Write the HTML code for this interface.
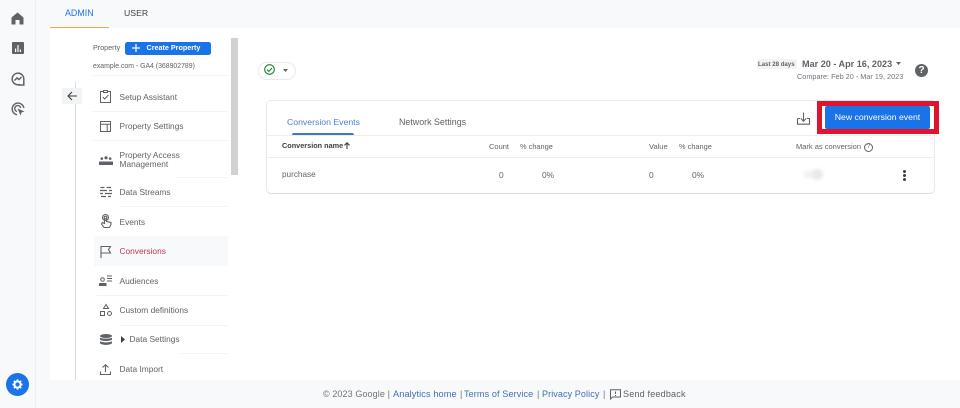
<!DOCTYPE html>
<html><head><meta charset="utf-8"><style>
html,body{margin:0;padding:0}
body{width:960px;height:408px;overflow:hidden;position:relative;background:#fff;font-family:"Liberation Sans",sans-serif;color:#5f6368;filter:blur(.3px)}
.a{position:absolute;white-space:nowrap}
.t{position:absolute;white-space:nowrap;font-size:8.350px;line-height:10px;color:#5f6368}
.h{position:absolute;height:1px;background:#f1f3f4}
svg{position:absolute;overflow:visible}
</style></head><body>
<div class="a" style="left:0;top:0;width:960px;height:28px;background:#f8f9fa"></div>
<div class="a" style="left:0;top:0;width:50px;height:408px;background:#f8f9fa"></div>
<div class="a" style="left:0;top:380px;width:960px;height:28px;background:#f8f9fa"></div>
<div class="a" style="left:0;top:0;width:35px;height:408px;background:#f8f9fa;border-right:1px solid #eceef0"></div>

<svg style="left:11px;top:12px" width="13" height="13" viewBox="0 0 13 13"><path d="M6.500 .5L12.500 5.500V12.500H8.500V8H4.500V12.500H.5V5.500Z" fill="#5f6368"/></svg>
<svg style="left:12px;top:42px" width="12" height="12" viewBox="0 0 12 12"><rect width="12" height="12" rx="1" fill="#5f6368"/><path d="M3 6.500h1.200V10H3zM5.400 3h1.200v7H5.400zM7.800 7.500H9V10H7.800z" fill="#fff"/></svg>
<svg style="left:11px;top:72px" width="14" height="14" viewBox="0 0 14 14" fill="none" stroke="#5f6368" stroke-width="1.500"><path d="M9 12.400A5.800 5.800 0 1 1 12.800 7V13H7"/><path d="M3.500 8.500L6 6l2 1.500 2.500-2.500"/></svg>
<svg style="left:11px;top:102px" width="14" height="14" viewBox="0 0 14 14" fill="none" stroke="#5f6368" stroke-width="1.400"><path d="M6 12.800A5.900 5.900 0 1 1 12.900 6"/><path d="M6 9.500A3 3 0 1 1 9.700 6"/><path d="M6.500 6.500L13.500 9.500 10.500 10.500 9.500 13.500Z" fill="#5f6368" stroke="none"/></svg>
<div class="a" style="left:6px;top:373px;width:23px;height:23px;border-radius:50%;background:#1a73e8"></div>
<svg style="left:12px;top:379px" width="11" height="11" viewBox="0 0 12 12"><circle cx="6" cy="6" r="3.400" fill="none" stroke="#fff" stroke-width="2.200"/><path d="M6 .5V2.500M6 9.500V11.500M.5 6H2.500M9.500 6H11.500M2.100 2.100L3.500 3.500M8.500 8.500L9.900 9.900M2.100 9.900L3.500 8.500M8.500 3.500L9.900 2.100" stroke="#fff" stroke-width="2"/></svg>

<div class="a" style="left:65px;top:7px;font-size:8.900px;line-height:12px;color:#1a73e8">ADMIN</div>
<div class="a" style="left:124px;top:7px;font-size:8.700px;line-height:12px;color:#3c4043">USER</div>
<div class="a" style="left:50px;top:27px;width:59px;height:1px;background:#f0a94a"></div>

<div class="t" style="left:93px;top:43px;font-size:7.200px">Property</div>
<div class="a" style="left:125px;top:41.500px;width:86px;height:13px;border-radius:2.500px;background:#1a73e8"></div>
<svg style="left:132px;top:44px" width="8" height="8"><path d="M4 0V8M0 4H8" stroke="#fff" stroke-width="1.200"/></svg>
<div class="a" style="left:146.500px;top:43px;font-size:7.200px;line-height:10px;font-weight:bold;color:#fff">Create Property</div>
<div class="t" style="left:93px;top:62px;font-size:6.900px">example.com - GA4 (368902789)</div>
<div class="h" style="left:93px;top:75px;width:135px"></div>

<div class="a" style="left:75px;top:82px;width:1px;height:298px;background:#dadce0"></div>
<div class="a" style="left:62px;top:88px;width:20px;height:16px;background:#f1f3f4;border-radius:1px"></div>
<svg style="left:67px;top:91px" width="10" height="10" viewBox="0 0 10 10" fill="none" stroke="#3c4043" stroke-width="1.100"><path d="M10 5H1M5 1L1 5l4 4"/></svg>

<div class="a" style="left:231px;top:38px;width:7px;height:137px;background:#d0d1d2"></div>

<svg style="left:100px;top:90px" width="11" height="13" viewBox="0 0 11 13" fill="none" stroke="#5f6368"><path d="M3.500 1.500H.5V12.500H10.500V1.500H7.500"/><rect x="3.500" y=".5" width="4" height="2"/><path d="M2.800 7l2 2L8.300 5"/></svg>
<div class="t" style="left:119.500px;top:92px">Setup Assistant</div>
<div class="h" style="left:93px;top:111px;width:135px"></div>

<svg style="left:100px;top:121px" width="11" height="11" viewBox="0 0 11 11" fill="none" stroke="#5f6368"><rect x=".5" y=".5" width="10" height="10"/><path d="M.5 3.200H10.500M7.200 3.200V10.500"/></svg>
<div class="t" style="left:119.500px;top:121px">Property Settings</div>
<div class="h" style="left:93px;top:140px;width:135px"></div>

<svg style="left:99px;top:156px" width="14" height="9" viewBox="0 0 14 9" fill="#5f6368"><circle cx="7" cy="1.800" r="1.600"/><circle cx="2.800" cy="2.600" r="1.300"/><circle cx="11.200" cy="2.600" r="1.300"/><path d="M0 5.500h14V9H0z"/></svg>
<div class="t" style="left:119.500px;top:150.500px;line-height:9.500px">Property Access<br>Management</div>
<div class="h" style="left:176px;top:177px;width:52px"></div>

<svg style="left:100px;top:186px" width="12" height="12" viewBox="0 0 12 12" stroke="#5f6368" stroke-width="1.200" fill="none"><path d="M.5 1.500H4.500M6.500 1.500H11M0 4.500H7M9 4.500H12M0 7.500H3M5 7.500H12M1 10.500H6M8 10.500H11"/></svg>
<div class="t" style="left:119.500px;top:187px">Data Streams</div>
<div class="h" style="left:120px;top:206px;width:108px"></div>

<svg style="left:100px;top:214px" width="12" height="15" viewBox="0 0 12 15" fill="none" stroke="#5f6368" stroke-width="1.100"><circle cx="5.500" cy="3.500" r="3"/><circle cx="5.500" cy="3.500" r="1.300"/><path d="M4.500 4V9.500L2.500 8.500 1.500 10 4 13.500H9.500L11 10.500V8.500L6.500 7.500V4"/></svg>
<div class="t" style="left:119.500px;top:216.500px">Events</div>

<div class="a" style="left:94px;top:236px;width:134px;height:30px;background:#f8f9fa"></div>
<svg style="left:100px;top:245px" width="11" height="13" viewBox="0 0 11 13" fill="none" stroke="#5f6368" stroke-width="1.100"><path d="M1 13V1.500H10.500L8.500 4.500 10.500 8H1"/></svg>
<div class="t" style="left:119.500px;top:246px;color:#b5395a">Conversions</div>

<svg style="left:99px;top:275px" width="13" height="11" viewBox="0 0 13 11" fill="none" stroke="#5f6368" stroke-width="1"><circle cx="3.500" cy="4.500" r="1.800"/><path d="M.5 10.500V8.500H7V10.500Z" fill="#5f6368"/><path d="M8 1h5M8 3.500h5M8 6h5"/></svg>
<div class="t" style="left:119.500px;top:276px">Audiences</div>
<div class="h" style="left:97px;top:295px;width:131px"></div>

<svg style="left:100px;top:304px" width="12" height="12" viewBox="0 0 12 12" fill="none" stroke="#5f6368"><path d="M6 .5L8.500 4.500H3.500Z"/><rect x=".5" y="7.500" width="4" height="4"/><circle cx="9.500" cy="9.500" r="2"/></svg>
<div class="t" style="left:119.500px;top:305px">Custom definitions</div>
<div class="h" style="left:120px;top:325px;width:108px"></div>

<svg style="left:100px;top:334px" width="12" height="11" viewBox="0 0 12 11" fill="#5f6368"><ellipse cx="6" cy="2" rx="6" ry="2"/><path d="M0 3.500C1 5 11 5 12 3.500V5.500C11 7.500 1 7.500 0 5.500ZM0 7C1 8.800 11 8.800 12 7V9C11 11.500 1 11.500 0 9Z"/></svg>
<svg style="left:120.500px;top:336px" width="4" height="7"><path d="M0 0L4 3.500 0 7Z" fill="#3c4043"/></svg>
<div class="t" style="left:129.500px;top:334px">Data Settings</div>
<div class="h" style="left:180px;top:353px;width:48px"></div>

<svg style="left:100px;top:364px" width="11" height="11" viewBox="0 0 11 11" fill="none" stroke="#5f6368" stroke-width="1.100"><path d="M.5 7.500V10.500H10.500V7.500M5.500 8V1M2.500 3.500L5.500 .8 8.500 3.500"/></svg>
<div class="t" style="left:119.500px;top:364px">Data Import</div>

<div class="a" style="left:258px;top:61.500px;width:36px;height:16px;border:1px solid #e8eaed;border-radius:9px;background:#fff"></div>
<svg style="left:264px;top:64px" width="11" height="11" viewBox="0 0 11 11" fill="none" stroke="#188038" stroke-width="1.100"><circle cx="5.500" cy="5.500" r="4.800"/><path d="M3 5.700l1.800 1.800L8 4"/></svg>
<svg style="left:283px;top:68.500px" width="5" height="3"><path d="M0 0H5L2.500 3Z" fill="#5f6368"/></svg>

<div class="a" style="left:757px;top:59px;width:40px;height:10px;background:#f1f3f4;border-radius:2px"></div>
<div class="a" style="left:758px;top:59.500px;font-size:6.100px;line-height:9px;font-weight:bold;color:#5f6368">Last 28 days</div>
<div class="a" style="left:802px;top:58px;font-size:9.100px;line-height:12px;font-weight:bold;color:#5f6368">Mar 20 - Apr 16, 2023</div>
<svg style="left:896px;top:62px" width="5" height="3"><path d="M0 0H5L2.500 3Z" fill="#5f6368"/></svg>
<div class="a" style="left:797px;top:72px;font-size:7.300px;line-height:10px;color:#70757a">Compare: Feb 20 - Mar 19, 2023</div>
<div class="a" style="left:915px;top:64px;width:13px;height:13px;border-radius:50%;background:#5f6368;color:#fff;font-size:10px;line-height:13px;text-align:center;font-weight:bold">?</div>

<div class="a" style="left:266px;top:100px;width:667px;height:92px;border:1px solid #e8eaed;border-bottom-color:#dadce0;border-radius:5px;background:#fff"></div>
<div class="t" style="left:287px;top:117px;font-size:8.700px;line-height:11px;color:#4a80d0">Conversion Events</div>
<div class="a" style="left:292px;top:133px;width:62px;height:2px;background:#3b78c9;border-radius:2px 2px 0 0"></div>
<div class="t" style="left:399px;top:117px;font-size:8.900px;line-height:11px">Network Settings</div>
<div class="h" style="left:267px;top:135px;width:667px;background:#eceef0"></div>
<div class="h" style="left:267px;top:157px;width:667px;background:#eceef0"></div>

<div class="a" style="left:282px;top:141px;font-size:7.300px;line-height:10px;font-weight:bold;color:#3c4043">Conversion name</div>
<svg style="left:344px;top:142px" width="6" height="7" viewBox="0 0 6 7" fill="none" stroke="#3c4043" stroke-width="1.100"><path d="M3 7V.8M.5 3.300L3 .8l2.500 2.500"/></svg>
<div class="t" style="left:489px;top:141.500px;font-size:7.500px">Count</div>
<div class="t" style="left:520px;top:141.500px;font-size:7.400px">% change</div>
<div class="t" style="left:649px;top:141.500px;font-size:7.500px">Value</div>
<div class="t" style="left:679px;top:141.500px;font-size:7.400px">% change</div>
<div class="t" style="left:796px;top:141.500px;font-size:7.500px">Mark as conversion</div>
<div class="a" style="left:864px;top:142.500px;width:7px;height:7px;border:1px solid #5f6368;border-radius:50%;font-size:6px;line-height:7px;text-align:center">?</div>

<div class="t" style="left:282px;top:170px;font-size:8.200px">purchase</div>
<div class="t" style="left:499px;top:170px;font-size:8.400px">0</div>
<div class="t" style="left:542px;top:170px;font-size:8.400px">0%</div>
<div class="t" style="left:649px;top:170px;font-size:8.400px">0</div>
<div class="t" style="left:692px;top:170px;font-size:8.400px">0%</div>
<div class="a" style="left:803px;top:171px;width:18px;height:7px;border-radius:4px;background:#f1f3f4;filter:blur(1.500px)"></div>
<div class="a" style="left:812px;top:169px;width:11px;height:11px;border-radius:50%;background:#e8eaed;filter:blur(1.500px)"></div>
<div class="a" style="left:903px;top:170px;width:3px;height:3px;border-radius:50%;background:#3c4043;box-shadow:0 4px 0 #3c4043,0 8px 0 #3c4043"></div>

<svg style="left:797px;top:112px" width="13" height="13" viewBox="0 0 13 13" fill="none" stroke="#5f6368" stroke-width="1.100"><path d="M.5 6.500V12.200H12.500V6.500H10M3 6.500H.5M6.500 .5V9M3.800 6.500L6.500 9.200 9.200 6.500"/></svg>

<div class="a" style="left:817px;top:101px;width:122px;height:33px;background:#e0142c"></div>
<div class="a" style="left:822px;top:106px;width:112px;height:23px;background:#fff"></div>
<div class="a" style="left:825px;top:106px;width:105px;height:23px;background:#1a73e8;border-radius:2px"></div>
<div class="a" style="left:825px;top:106px;width:105px;height:23px;line-height:23px;text-align:center;color:#fff;font-size:8.700px">New conversion event</div>

<div class="a" style="left:323px;top:389px;font-size:9px;line-height:11px;letter-spacing:.1px;color:#70757a">© 2023 Google |</div>
<div class="a" style="left:393px;top:389px;font-size:9.200px;line-height:11px;letter-spacing:.1px;color:#3f6fb5">Analytics home</div>
<div class="a" style="left:460px;top:389px;font-size:9px;line-height:11px;color:#70757a">|</div>
<div class="a" style="left:464px;top:389px;font-size:9.100px;line-height:11px;letter-spacing:.1px;color:#3f6fb5">Terms of Service</div>
<div class="a" style="left:537px;top:389px;font-size:9px;line-height:11px;color:#70757a">|</div>
<div class="a" style="left:542px;top:389px;font-size:9px;line-height:11px;letter-spacing:.1px;color:#3f6fb5">Privacy Policy</div>
<div class="a" style="left:603px;top:389px;font-size:9px;line-height:11px;color:#70757a">|</div>
<svg style="left:610px;top:389px" width="11" height="11" viewBox="0 0 11 11" fill="none" stroke="#5f6368"><path d="M.5 .8H10.500V8H2.500L.5 10Z"/><path d="M5.500 2.500V5M5.500 6V7"/></svg>
<div class="a" style="left:623px;top:389px;font-size:9px;line-height:11px;letter-spacing:.2px;color:#5f6368">Send feedback</div>
</body></html>
